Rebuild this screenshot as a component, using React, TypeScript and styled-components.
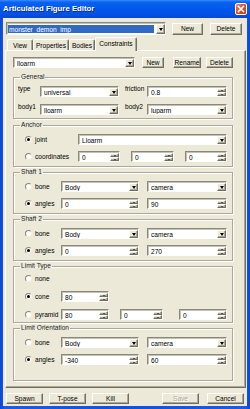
import styled, { createGlobalStyle, css } from "styled-components";

const GlobalStyle = createGlobalStyle`
  html, body {
    margin: 0;
    padding: 0;
    background: #fff;
  }

  body {
    font-family: "Liberation Sans", Arial, sans-serif;
    font-size: 6.6px;
    color: #000;
  }
`;

const face = "#ECE9D8";

const raised = css`
  box-sizing: border-box;
  background: ${face};
  border: 1px solid;
  border-color: #fff #716f64 #716f64 #fff;
  box-shadow: inset -1px -1px 0 #aca899;
`;

const sunken = css`
  box-sizing: border-box;
  background: #fff;
  border: 1px solid;
  border-color: #8a877b #fdfdfb #fdfdfb #8a877b;
  box-shadow: inset 1px 1px 0 #c4c1b3;
`;

const Window = styled.div`
  width: 250px;
  height: 409px;
  box-sizing: border-box;
  display: flex;
  flex-direction: column;
  background: linear-gradient(to right, #0a48d8, #1a5cea 2%, #0c52e2 50%, #1a5cea 98%, #0a48d8);
`;

const TitleBar = styled.div`
  height: 18px;
  flex: none;
  display: flex;
  align-items: center;
  padding: 0 3px 1px 3px;
  box-sizing: border-box;
  background: linear-gradient(
    to bottom,
    #3a8cff 0%,
    #0a62f2 12%,
    #0058ee 45%,
    #0450e4 80%,
    #0648d4 100%
  );
  color: #fff;
  font-weight: bold;
  font-size: 7.8px;
  text-shadow: 1px 1px 0 #0a2a8a;
`;

const CloseButton = styled.div`
  margin-left: auto;
  width: 12px;
  height: 12px;
  box-sizing: border-box;
  border: 1px solid #fff;
  border-radius: 2px;
  background: linear-gradient(135deg, #f08a6a, #e0502c 45%, #c43818);
  display: flex;
  align-items: center;
  justify-content: center;
`;

const Client = styled.div`
  flex: 1;
  margin: 0 3px 3px;
  background: ${face};
  display: flex;
  flex-direction: column;
  padding-top: 4px;
`;

const TopRow = styled.div`
  display: flex;
  align-items: center;
  padding-left: 3px;
  height: 13px;
`;

const Button = styled.div<{ $w: number; $h?: number; $ml?: number; $disabled?: boolean }>`
  ${raised};
  width: ${(p) => p.$w}px;
  height: ${(p) => p.$h ?? 11}px;
  margin-left: ${(p) => p.$ml ?? 0}px;
  flex: none;
  display: flex;
  align-items: center;
  justify-content: center;
  color: ${(p) => (p.$disabled ? "#aca899" : "#000")};
  text-shadow: ${(p) => (p.$disabled ? "1px 1px 0 #fff" : "none")};
`;

const Field = styled.div<{ $w: number; $h?: number; $ml?: number }>`
  ${sunken};
  width: ${(p) => p.$w}px;
  height: ${(p) => p.$h ?? 11}px;
  margin-left: ${(p) => p.$ml ?? 0}px;
  flex: none;
  display: flex;
  align-items: stretch;
  padding: 1px 0 0 1px;
`;

const FieldText = styled.span<{ $selected?: boolean }>`
  flex: 1;
  min-width: 0;
  display: flex;
  align-items: center;
  padding-left: 2px;
  white-space: nowrap;
  overflow: hidden;
  ${(p) =>
    p.$selected &&
    css`
      background: #316ac5;
      color: #fff;
      margin: 1px 2px 1px 0;
      padding-left: 1px;
    `}
`;

const DropButton = styled.span`
  ${raised};
  width: 9px;
  flex: none;
  display: flex;
  align-items: center;
  justify-content: center;

  &::after {
    content: "";
    border-left: 2.5px solid transparent;
    border-right: 2.5px solid transparent;
    border-top: 3px solid #000;
  }
`;

const SpinBox = styled.span`
  width: 9px;
  flex: none;
  display: flex;
  flex-direction: column;
`;

const SpinHalf = styled.span<{ $down?: boolean }>`
  ${raised};
  flex: 1;
  display: flex;
  align-items: center;
  justify-content: center;

  &::after {
    content: "";
    border-left: 1.5px solid transparent;
    border-right: 1.5px solid transparent;
    ${(p) =>
      p.$down
        ? css`border-top: 1.5px solid #000;`
        : css`border-bottom: 1.5px solid #000;`}
  }
`;

const TabStrip = styled.div`
  display: flex;
  align-items: flex-end;
  height: 13px;
  margin-top: 2px;
  padding-left: 4px;
`;

const Tab = styled.div<{ $w: number; $active?: boolean }>`
  box-sizing: border-box;
  width: ${(p) => p.$w}px;
  height: ${(p) => (p.$active ? 14 : 11)}px;
  margin-bottom: ${(p) => (p.$active ? -1 : 0)}px;
  border: 1px solid;
  border-bottom: none;
  border-color: #fff #716f64 transparent #fff;
  border-radius: 2px 2px 0 0;
  background: ${face};
  box-shadow: inset -1px 0 0 #aca899;
  display: flex;
  align-items: center;
  justify-content: center;
  padding-bottom: ${(p) => (p.$active ? 2 : 0)}px;
  position: relative;
  z-index: ${(p) => (p.$active ? 1 : 0)};
`;

const TabPanel = styled.div`
  box-sizing: border-box;
  width: 241px;
  height: 338px;
  margin-left: 2px;
  border: 1px solid;
  border-color: #fff #716f64 #716f64 #fff;
  box-shadow: inset -1px -1px 0 #aca899;
  padding: 6px 12px 6px 7px;
  display: flex;
  flex-direction: column;
`;

const Row = styled.div<{ $gap?: number }>`
  display: flex;
  align-items: center;
  height: 11px;
`;

const Group = styled.fieldset<{ $mt: number; $pt?: number; $pb?: number; $gap?: number; $fill?: boolean }>`
  margin: ${(p) => p.$mt}px 0 0 0;
  padding: ${(p) => p.$pt ?? 5}px 4px ${(p) => p.$pb ?? 4}px 4px;
  border: 1px solid #aca899;
  box-shadow: inset 1px 1px 0 #fff, 1px 1px 0 #fff;
  min-width: 0;
  display: flex;
  flex-direction: column;
  gap: ${(p) => p.$gap ?? 6}px;
  ${(p) => p.$fill && css`flex: 1;`}
`;

const Legend = styled.legend`
  padding: 0 1px;
  margin-left: 2px;
  line-height: 8px;
  color: #1a1a1a;
`;

const Label = styled.span<{ $w: number; $ml?: number }>`
  width: ${(p) => p.$w}px;
  margin-left: ${(p) => p.$ml ?? 0}px;
  flex: none;
  white-space: nowrap;
  align-self: flex-start;
  margin-top: -1px;
`;

const Option = styled.label<{ $w?: number }>`
  width: ${(p) => (p.$w ? `${p.$w}px` : "auto")};
  flex: none;
  display: flex;
  align-items: center;
  gap: 3px;
  padding-left: 7px;
  box-sizing: border-box;
  white-space: nowrap;
`;

const RadioDot = styled.span<{ $on?: boolean }>`
  width: 7px;
  height: 7px;
  box-sizing: border-box;
  border-radius: 50%;
  background: #fff;
  border: 1px solid;
  border-color: #8a877b #f1efe2 #f1efe2 #8a877b;
  display: flex;
  align-items: center;
  justify-content: center;

  &::after {
    content: "";
    width: 3px;
    height: 3px;
    border-radius: 50%;
    background: ${(p) => (p.$on ? "#000" : "transparent")};
  }
`;

const BottomRow = styled.div`
  display: flex;
  align-items: center;
  margin-top: 5px;
  padding: 0 3px;
  gap: 6px;
`;

const Combo = ({ w, h, ml, value, selected }: { w: number; h?: number; ml?: number; value: string; selected?: boolean }) => (
  <Field $w={w} $h={h} $ml={ml}>
    <FieldText $selected={selected}>{value}</FieldText>
    <DropButton />
  </Field>
);

const Spin = ({ w, ml, value }: { w: number; ml?: number; value: string }) => (
  <Field $w={w} $ml={ml}>
    <FieldText>{value}</FieldText>
    <SpinBox>
      <SpinHalf />
      <SpinHalf $down />
    </SpinBox>
  </Field>
);

const Radio = ({ w, on, label }: { w?: number; on?: boolean; label: string }) => (
  <Option $w={w}>
    <RadioDot $on={on} />
    {label}
  </Option>
);

const DirectionGroup = ({ title, mt, a, b, gap }: { title: string; mt: number; a: string; b: string; gap?: number }) => (
  <Group $mt={mt} $gap={gap}>
    <Legend>{title}</Legend>
    <Row>
      <Radio w={43} label="bone" />
      <Combo w={78} value="Body" />
      <Combo w={80} ml={8} value="camera" />
    </Row>
    <Row>
      <Radio w={43} on label="angles" />
      <Spin w={78} value={a} />
      <Spin w={80} ml={8} value={b} />
    </Row>
  </Group>
);

export default function App() {
  return (
    <>
      <GlobalStyle />
      <Window>
        <TitleBar>
          Articulated Figure Editor
          <CloseButton>
            <svg width="8" height="8" viewBox="0 0 8 8">
              <path d="M1.5 1.5 L6.5 6.5 M6.5 1.5 L1.5 6.5" stroke="#fff" strokeWidth="1.6" strokeLinecap="square" />
            </svg>
          </CloseButton>
        </TitleBar>
        <Client>
          <TopRow>
            <Combo w={160} h={13} value="monster_demon_imp" selected />
            <Button $w={31} $h={12} $ml={6}>New</Button>
            <Button $w={32} $h={12} $ml={7}>Delete</Button>
          </TopRow>
          <TabStrip>
            <Tab $w={26}>View</Tab>
            <Tab $w={36}>Properties</Tab>
            <Tab $w={26}>Bodies</Tab>
            <Tab $w={42} $active>Constraints</Tab>
          </TabStrip>
          <TabPanel>
            <Row>
              <Combo w={122} value="lloarm" />
              <Button $w={22} $ml={7}>New</Button>
              <Button $w={28} $ml={9}>Rename</Button>
              <Button $w={27} $ml={5}>Delete</Button>
            </Row>

            <Group $mt={5} $gap={7} $pb={3}>
              <Legend>General</Legend>
              <Row>
                <Label $w={22}>type</Label>
                <Combo w={79} value="universal" />
                <Label $w={22} $ml={6}>friction</Label>
                <Spin w={80} value="0.8" />
              </Row>
              <Row>
                <Label $w={22}>body1</Label>
                <Combo w={79} value="lloarm" />
                <Label $w={22} $ml={6}>body2</Label>
                <Combo w={80} value="luparm" />
              </Row>
            </Group>

            <Group $mt={2}>
              <Legend>Anchor</Legend>
              <Row>
                <Radio w={60} on label="joint" />
                <Combo w={149} value="Lloarm" />
              </Row>
              <Row>
                <Radio w={60} label="coordinates" />
                <Spin w={42} value="0" />
                <Spin w={43} ml={11} value="0" />
                <Spin w={42} ml={11} value="0" />
              </Row>
            </Group>

            <DirectionGroup title="Shaft 1" mt={1} a="0" b="90" />
            <DirectionGroup title="Shaft 2" mt={1} a="0" b="270" />

            <Group $mt={1} $pt={3} $pb={2} $gap={7}>
              <Legend>Limit Type</Legend>
              <Row>
                <Radio label="none" />
              </Row>
              <Row>
                <Radio w={43} on label="cone" />
                <Spin w={48} value="80" />
              </Row>
              <Row>
                <Radio w={43} label="pyramid" />
                <Spin w={48} value="80" />
                <Spin w={43} ml={11} value="0" />
                <Spin w={48} ml={16} value="0" />
              </Row>
            </Group>

            <Group $mt={1} $fill>
              <Legend>Limit Orientation</Legend>
              <Row>
                <Radio w={43} label="bone" />
                <Combo w={78} value="Body" />
                <Combo w={80} ml={8} value="camera" />
              </Row>
              <Row>
                <Radio w={43} on label="angles" />
                <Spin w={78} value="-340" />
                <Spin w={80} ml={8} value="60" />
              </Row>
            </Group>
          </TabPanel>
          <BottomRow>
            <Button $w={37}>Spawn</Button>
            <Button $w={37}>T-pose</Button>
            <Button $w={37}>Kill</Button>
            <Button $w={37} $ml={27} $disabled>Save</Button>
            <Button $w={37} $ml={2}>Cancel</Button>
          </BottomRow>
        </Client>
      </Window>
    </>
  );
}
